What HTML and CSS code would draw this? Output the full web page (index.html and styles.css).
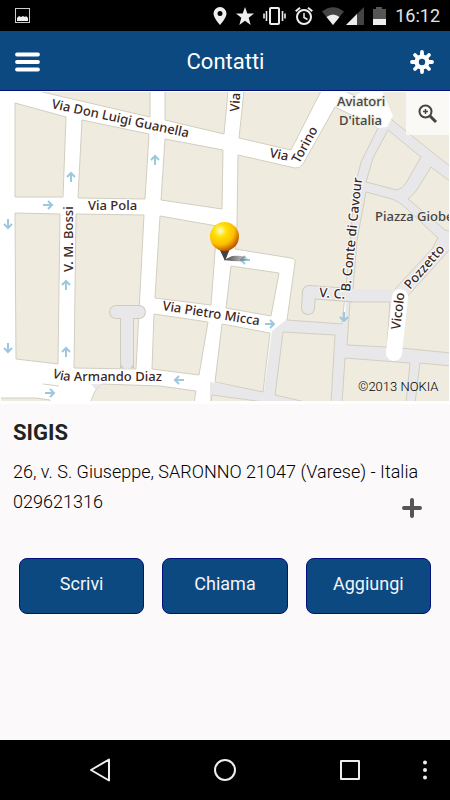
FILE: index.html
```
<!DOCTYPE html>
<html lang="it">
<head>
	<meta charset="utf-8">
	<meta name="viewport" content="width=device-width, initial-scale=1">
	<title>Contatti</title>
	<link rel="stylesheet" href="styles.css">
</head>
<body>
	<div class="status">
		<svg class="picture" width="15" height="15" viewBox="0 0 15 15">
			<rect x="0.5" y="0.5" width="14" height="14" fill="none" stroke="#ccc"/>
			<path d="M2 13V10l2-2 2 1 2-1 2 1 1-1 2 2v3z" fill="#eee"/>
		</svg>
		<svg width="14" height="18" viewBox="0 0 14 18">
			<path d="M7 0a6.500 6.500 0 0 0-6.500 6.500C.5 11 7 18 7 18s6.500-7 6.500-11.500A6.500 6.500 0 0 0 7 0zm0 4a2.500 2.500 0 1 1 0 5 2.500 2.500 0 0 1 0-5z" fill="#eee" fill-rule="evenodd"/>
		</svg>
		<svg width="18" height="18" viewBox="0 0 18 18">
			<path d="M9 0l2.300 6.500H18l-5.300 4.300 2 7.200L9 13.800 3.300 18l2-7.200L0 6.500h6.700z" fill="#eee"/>
		</svg>
		<svg width="23" height="18" viewBox="0 0 23 18">
			<rect x="7" y="1" width="9" height="16" rx="1" fill="none" stroke="#eee" stroke-width="2"/>
			<path d="M3.500 4v10M19.500 4v10M1 6.500v5M22 6.500v5" stroke="#eee" stroke-width="1.600"/>
		</svg>
		<svg width="18" height="18" viewBox="0 0 18 18">
			<g fill="none" stroke="#eee" stroke-width="2">
				<circle cx="9" cy="10" r="7"/>
				<path d="M.7 4.200L5 .8M17.300 4.200L13 .8"/>
				<path d="M9 6v4.500l3.500 2" stroke-width="1.500"/>
			</g>
		</svg>
		<svg width="42" height="18" viewBox="0 0 42 18">
			<path d="M0 4.500Q11-4 22 4.500L11 18z" fill="#444"/>
			<path d="M4.500 10Q11 5 17.500 10L11 18z" fill="#eee"/>
			<path d="M42 0v18H24z" fill="#444"/>
			<path d="M35 7v11H24z" fill="#eee"/>
		</svg>
		<svg class="battery" width="13" height="18" viewBox="0 0 13 18">
			<path d="M3 0h6v2h4v11H0V2h3z" fill="#555"/>
			<path d="M0 12h13v6H0z" fill="#eee"/>
		</svg>
		<span class="clock">16:12</span>
	</div>

	<header class="header">
		<button class="icon" aria-label="Menu">
			<svg width="26" height="20" viewBox="0 0 26 20">
				<path d="M2 2.500h21M2 10h21M2 17.500h21" stroke="#fff" stroke-width="3.800" stroke-linecap="round"/>
			</svg>
		</button>
		<h1>Contatti</h1>
		<button class="icon" aria-label="Impostazioni">
			<svg width="24" height="24" viewBox="-12 -12 24 24">
				<g stroke="#fff" stroke-width="3.800" stroke-linecap="round">
					<path d="M0-10v4M0 10v-4M-10 0h4M10 0h-4"/>
					<path d="M-7-7l3 3M7 7l-3-3M-7 7l3-3M7-7l-3 3"/>
				</g>
				<circle r="5.400" fill="none" stroke="#fff" stroke-width="4.400"/>
			</svg>
		</button>
	</header>

	<main class="content">
		<div class="map">
			<svg class="streets" viewBox="1 92 448 309">
				<rect x="0" y="92" width="450" height="310" fill="#fff"/>
				<!-- minor roads -->
				<path class="minor" d="M287 319l58 4 5-140 28-62 16-4 57 50v235H210v-20l54 9 8-60z"/>
				<!-- blocks -->
				<g class="block">
					<path d="M38 91l112 26V91z"/>
					<path d="M15 103l51 14-3 80H15z"/>
					<path d="M82 120l67 14-4 65-67-1z"/>
					<path d="M15 213l45 1-2 150-42-5z"/>
					<path d="M76 214l68 1-8 154-62-1z"/>
					<path d="M43 384l16 2"/>
					<path d="M0 398h36l14 2v4H0z"/>
					<path d="M102 384l58 2 36 5-2 12H90l5-12z"/>
					<path d="M165 91h63l-4 43-59-14z"/>
					<path d="M165 139l58 11-1 59-61-9z"/>
					<path d="M160 216l57 10-6 79-56-7z"/>
					<path d="M154 314l54 8-9 53-47-6z"/>
					<path d="M244 91h77l-30 59-52-12z"/>
					<path d="M238 155l57 13q5 1 8-4l32-57 43 21-17 34-7 28-4 58-8 76-55-4 8-57q1-4-4-5l-56-9 2-24z"/>
					<path d="M231 266l48 7-8 43-45-8z"/>
					<path d="M222 324l48 9-7 59-48-10z"/>
					<path d="M212 395l52 7h-53z"/>
					<path d="M283 332l52 3-4 68h-21l-35-8z"/>
					<path d="M350 302h40l-3 45-40-2z"/>
					<path d="M345 358l65 5-4 40h-64z"/>
					<path d="M420 363l32 3v37h-37z"/>
					<path d="M406 298l45-50v105l-50-5z"/>
					<path d="M366 192l26 7q8 3 14 9l32 30-6 11-38 41h-41l4-50z"/>
					<path d="M388 130l33 27-15 26q-4 6-9 7l-31-8 7-24z"/>
					<path d="M431 167l20 15v49l-6-1-37-31q5-4 8-8z"/>
					<path d="M380 91h71v76l-59-47z"/>
					<path d="M345 91h16l-4 6z"/>
				</g>
				<!-- end of the main road -->
				<path d="M340 107l22-16h20l11 25-6 11-9 1z" fill="#fff"/>
				<!-- dead ends -->
				<path class="edge" d="M139 312h-23"/>
				<path class="edge flat" d="M127 312v56"/>
				<path class="edge" d="M308 308l1-16 40 3"/>
				<path class="lane" d="M139 312h-23M127 312v51M308 308l1-16 42 3h46"/>
				<path d="M91 384h11l-6 6z" fill="#e8e8ea"/>
				<path d="M400 297l-6 56" stroke="#fff" stroke-width="16" stroke-linecap="round"/>
				<!-- one-way arrows -->
				<g class="arrow">
					<path d="M71 182v-9m-4 4l4-4 4 4"/>
					<path d="M155 165v-9m-4 4l4-4 4 4"/>
					<path d="M66 290v-9m-4 4l4-4 4 4"/>
					<path d="M66 357v-9m-4 4l4-4 4 4"/>
					<path d="M8 219v9m-4-4l4 4 4-4"/>
					<path d="M8 343v9m-4-4l4 4 4-4"/>
					<path d="M344 312v9m-4-4l4 4 4-4"/>
					<path d="M43 205h9m-4-4l4 4-4 4"/>
					<path d="M45 393h9m-4-4l4 4-4 4"/>
					<path d="M265 324h9m-4-4l4 4-4 4"/>
					<path d="M184 380h-9m4-4l-4 4 4 4"/>
					<path d="M250 260h-9m4-4l-4 4 4 4"/>
				</g>
				<!-- street names -->
				<defs>
					<path id="guanella" d="M51 108l180 39"/>
					<path id="diaz" d="M52 377q8 4 22 4l110 0"/>
				</defs>
				<g class="names">
					<text><textPath href="#guanella">Via Don Luigi Guanella</textPath></text>
					<text x="88" y="210">Via Pola</text>
					<text transform="translate(73 272) rotate(-90)">V. M. Bossi</text>
					<text transform="translate(239 112) rotate(-86)">Via</text>
					<text transform="translate(269 157) rotate(11)">Via</text>
					<text transform="translate(299 164) rotate(-61)">Torino</text>
					<text transform="translate(162 310) rotate(9)">Via Pietro Micca</text>
					<text><textPath href="#diaz">Via Armando Diaz</textPath></text>
					<text transform="translate(319 297) rotate(4)">V. C.</text>
					<text transform="translate(350 292) rotate(-84)">B. Conte di Cavour</text>
					<text transform="translate(400 330) rotate(-83)">Vicolo</text>
					<text transform="translate(410 290) rotate(-49)">Pozzetto</text>
				</g>
				<g class="places">
					<text x="337" y="106">Aviatori</text>
					<text x="339" y="125">D'italia</text>
					<text x="375" y="221">Piazza Giobe</text>
				</g>
				<text class="credit" x="358" y="391">©2013 NOKIA</text>
				<!-- pin -->
				<defs>
					<radialGradient id="ball" cx="0.35" cy="0.3" r="0.75">
						<stop offset="0" stop-color="#fffbd0"/>
						<stop offset="0.3" stop-color="#ffe000"/>
						<stop offset="0.65" stop-color="#fdbd00"/>
						<stop offset="1" stop-color="#b54800"/>
					</radialGradient>
					<linearGradient id="shade">
						<stop offset="0" stop-color="#444"/>
						<stop offset="1" stop-color="#444" stop-opacity="0.2"/>
					</linearGradient>
				</defs>
				<path d="M224 260l8-4q14-1 16 3-4 4-24 1z" fill="url(#shade)"/>
				<path d="M218 246h13l-6 15z" fill="#444"/>
				<circle cx="224.500" cy="236.500" r="14.500" fill="url(#ball)"/>
			</svg>
			<button class="zoom" aria-label="Ingrandisci">
				<svg width="20" height="20" viewBox="0 0 20 20">
					<g fill="none" stroke="#444">
						<circle cx="7.500" cy="7.500" r="6" stroke-width="2"/>
						<path d="M12 12l6 6" stroke-width="3"/>
						<path d="M7.500 5v5M5 7.500h5" stroke-width="1.500"/>
					</g>
				</svg>
			</button>
		</div>

		<section class="contact">
			<h2>SIGIS</h2>
			<p>26, v. S. Giuseppe, SARONNO 21047 (Varese) - Italia</p>
			<div class="row">
				<p>029621316</p>
				<button class="icon more" aria-label="Mostra altro">
					<svg width="20" height="20" viewBox="0 0 20 20">
						<path d="M10 2v16M2 10h16" stroke="#555" stroke-width="4" stroke-linecap="round"/>
					</svg>
				</button>
			</div>
		</section>

		<div class="actions">
			<button>Scrivi</button>
			<button>Chiama</button>
			<button>Aggiungi</button>
		</div>
	</main>

	<nav class="navbar">
		<button class="icon" aria-label="Indietro">
			<svg width="24" height="24" viewBox="0 0 24 24"><path d="M21 1.500v21L3 12z"/></svg>
		</button>
		<button class="icon" aria-label="Home">
			<svg width="24" height="24" viewBox="0 0 24 24"><circle cx="12" cy="12" r="10"/></svg>
		</button>
		<button class="icon" aria-label="Recenti">
			<svg width="24" height="24" viewBox="0 0 24 24"><rect x="3" y="3" width="18" height="18"/></svg>
		</button>
		<button class="icon dots" aria-label="Altro">
			<svg width="4" height="20" viewBox="0 0 4 20"><circle cx="2" cy="2.500" r="2"/><circle cx="2" cy="10" r="2"/><circle cx="2" cy="17.500" r="2"/></svg>
		</button>
	</nav>
</body>
</html>
```
FILE: styles.css
```
*{
	padding: 0;
	margin: 0;
	box-sizing: border-box;
}
body{
	display: flex;
	flex-direction: column;
	min-height: 100vh;
	background: #fcf9fb;
	color: #222;
	font-family: Roboto, "Liberation Sans", sans-serif;
	font-size: 18px;
}
button{
	font: inherit;
	cursor: pointer;
}
svg{
	display: block;
}
.icon{
	border: 0;
	background: none;
}
.status{
	display: flex;
	align-items: center;
	gap: 9px;
	height: 31px;
	padding: 0 10px 0 15px;
	background: #000;
}
.picture{
	margin-right: auto;
}
.clock{
	color: #e4e4e4;
	font-size: 18px;
	font-weight: 400;
}
.header{
	display: flex;
	align-items: center;
	justify-content: space-between;
	height: 60px;
	padding: 2px 16px 0 15px;
	background: #0b4980;
	border-bottom: 1px solid #00107c;
}
.header h1{
	color: #fff;
	font-size: 22px;
	font-weight: 400;
}
.content{
	flex: 1;
}
.map{
	position: relative;
	padding: 1px 1px 3px;
	background: #fff;
}
.streets{
	width: 100%;
	height: auto;
}
.minor{
	fill: #e8e8ea;
}
.block{
	fill: #efebdf;
	stroke: #d2cfc0;
}
.edge{
	fill: none;
	stroke: #cfccbe;
	stroke-width: 14;
	stroke-linecap: round;
	stroke-linejoin: round;
}
.flat{
	stroke-linecap: butt;
}
.lane{
	fill: none;
	stroke: #e8e8ea;
	stroke-width: 12;
	stroke-linecap: round;
	stroke-linejoin: round;
}
.arrow{
	fill: none;
	stroke: #9cc8de;
	stroke-width: 2;
}
.names, .places{
	font-family: "Noto Sans", "Open Sans", sans-serif;
	font-size: 13px;
	font-weight: 500;
	fill: #3c2722;
	stroke: #fff;
	stroke-width: 2;
	paint-order: stroke;
}
.places{
	fill: #444;
	stroke: #efebdf;
}
.credit{
	font-size: 13px;
	font-weight: 300;
	fill: #000;
}
.zoom{
	position: absolute;
	top: 1px;
	right: 1px;
	display: flex;
	align-items: center;
	justify-content: center;
	width: 43px;
	height: 43px;
	border: 0;
	background: rgba(255, 255, 255, 0.7);
}
.contact{
	padding: 12px 13px 0;
}
.contact h2{
	font-size: 22px;
	line-height: 34px;
	margin-bottom: 7px;
}
.contact p{
	color: #000;
	font-weight: 300;
	line-height: 30px;
}
.row{
	display: flex;
	justify-content: space-between;
	align-items: flex-start;
}
.more{
	padding: 11px 15px 0 0;
}
.actions{
	display: grid;
	grid-template-columns: repeat(3, 1fr);
	gap: 18px;
	padding: 40px 19px 20px;
}
.actions button{
	height: 56px;
	padding-bottom: 6px;
	color: #f4f4f8;
	background: #0b4980;
	border: 1px solid #00107c;
	border-radius: 8px;
}
.navbar{
	position: relative;
	display: flex;
	align-items: center;
	justify-content: center;
	gap: 101px;
	height: 60px;
	background: #000;
}
.navbar svg{
	fill: none;
	stroke: #eee;
	stroke-width: 2;
	stroke-linejoin: round;
}
.navbar .dots{
	position: absolute;
	right: 23px;
}
.navbar .dots svg{
	fill: #eee;
	stroke: none;
}
```
